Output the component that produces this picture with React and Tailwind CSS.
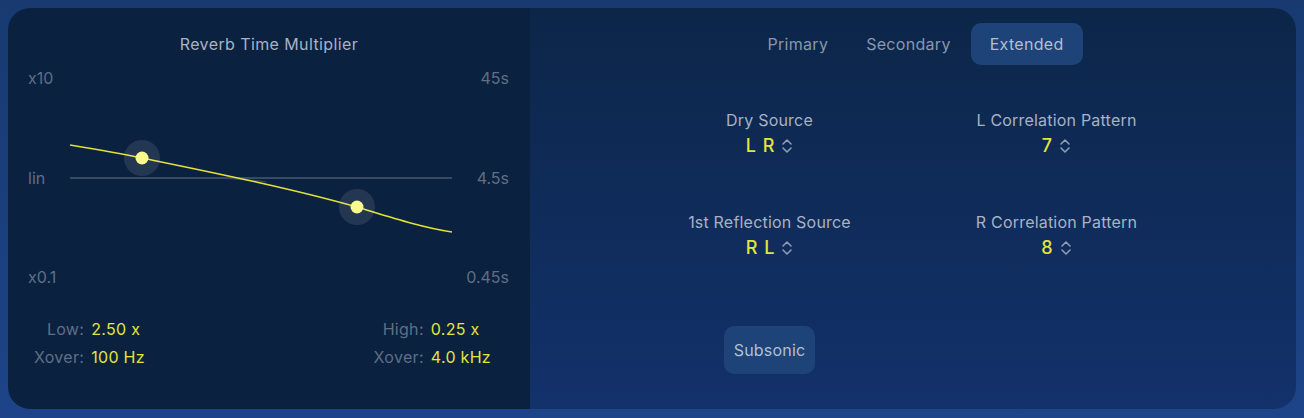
import React from "react";

// Small up/down stepper glyph next to each value
const Stepper = () => (
  <svg width="12" height="18" viewBox="0 0 12 18" fill="none" className="ml-[6px]">
    <path d="M2 7 L6 3 L10 7" stroke="#8e9cb2" strokeWidth="1.6" strokeLinecap="round" strokeLinejoin="round" />
    <path d="M2 11 L6 15 L10 11" stroke="#8e9cb2" strokeWidth="1.6" strokeLinecap="round" strokeLinejoin="round" />
  </svg>
);

const Param = ({ label, value }) => (
  <div className="flex flex-col items-center">
    <span className="text-[16px] leading-[20px] tracking-[0.2px] text-[#a7b3c4]">{label}</span>
    <span className="mt-[4px] flex items-center text-[18px] leading-[24px] font-medium text-[#e3e53a] tracking-[1px]">
      {value}
      <Stepper />
    </span>
  </div>
);

const Curve = () => (
  <svg width="382" height="219" viewBox="0 0 382 219" className="block">
    {/* linear reference line */}
    <line x1="0" y1="110" x2="382" y2="110" stroke="#46586f" strokeWidth="1.5" />
    <path d="M140 110 C 160 110, 175 111, 196 114" stroke="#3a4c64" strokeWidth="1.2" fill="none" />
    {/* multiplier curve */}
    <path
      d="M0 77 C 24 81, 48 85, 72 90 C 140 104, 220 120, 287 139 C 320 149, 350 159, 382 164"
      stroke="#e2e234"
      strokeWidth="1.6"
      fill="none"
    />
    <circle cx="72" cy="90" r="18" fill="#ffffff" fillOpacity="0.1" />
    <circle cx="72" cy="90" r="6.5" fill="#f9f98e" />
    <circle cx="287" cy="139" r="18" fill="#ffffff" fillOpacity="0.1" />
    <circle cx="287" cy="139" r="6.5" fill="#f9f98e" />
  </svg>
);

const Readout = ({ rows }) => (
  <div className="grid grid-cols-[auto_auto] gap-x-[7px] gap-y-[8px] text-[16px] leading-[20px] tracking-[0.3px]">
    {rows.map(([k, v]) => (
      <React.Fragment key={k + v}>
        <span className="text-right text-[#5f6f86]">{k}</span>
        <span className="text-[#e3e53a]">{v}</span>
      </React.Fragment>
    ))}
  </div>
);

export default function App() {
  return (
    <div
      className="w-[1304px] h-[418px] bg-gradient-to-b from-[#183a71] to-[#1d4488] p-2"
      style={{ fontFamily: "Inter, 'Noto Sans', sans-serif" }}
    >
      <div className="flex h-[401px] w-[1288px] overflow-hidden rounded-[22px]">
        {/* Left: reverb time graph */}
        <div className="flex w-[522px] flex-col bg-[#0b2140] pt-[26px]">
          <div className="text-center text-[16px] leading-[20px] tracking-[0.4px] text-[#a7b3c4]">
            Reverb Time Multiplier
          </div>
          <div className="mt-[14px] flex pl-[20px] text-[16px] leading-[20px] text-[#5f6f86]">
            <div className="flex h-[219px] w-[42px] flex-col justify-between">
              <span>x10</span>
              <span>lin</span>
              <span>x0.1</span>
            </div>
            <Curve />
            <div className="flex h-[219px] w-[57px] flex-col items-end justify-between">
              <span>45s</span>
              <span>4.5s</span>
              <span>0.45s</span>
            </div>
          </div>
          <div className="mt-[32px] flex justify-between pl-[26px] pr-[39px]">
            <Readout rows={[["Low:", "2.50 x"], ["Xover:", "100 Hz"]]} />
            <Readout rows={[["High:", "0.25 x"], ["Xover:", "4.0 kHz"]]} />
          </div>
        </div>

        {/* Right: extended parameters */}
        <div className="flex flex-1 flex-col bg-gradient-to-b from-[#0c2649] to-[#13316b] pt-[15px]">
          <div className="flex justify-center gap-[2px] pl-[6px] text-[16px] tracking-[0.3px]">
            <button className="h-[42px] rounded-[10px] px-[18px] text-[#8797ae]">Primary</button>
            <button className="h-[42px] rounded-[10px] px-[18px] text-[#8797ae]">Secondary</button>
            <button className="h-[42px] rounded-[10px] bg-[#1d4379] px-[19px] text-[#b3bfd0]">Extended</button>
          </div>

          <div className="mx-auto mt-[45px] grid w-[574px] grid-cols-2 gap-y-[54px]">
            <Param label="Dry Source" value="L R" />
            <Param label="L Correlation Pattern" value="7" />
            <Param label="1st Reflection Source" value="R L" />
            <Param label="R Correlation Pattern" value="8" />
          </div>

          <div className="mx-auto mt-[66px] grid w-[574px] grid-cols-2">
            <div className="flex justify-center">
              <button className="h-[48px] rounded-[10px] bg-[#1d4379] px-[10px] text-[16px] tracking-[0.2px] text-[#b3bfd0]">
                Subsonic
              </button>
            </div>
          </div>
        </div>
      </div>
    </div>
  );
}
